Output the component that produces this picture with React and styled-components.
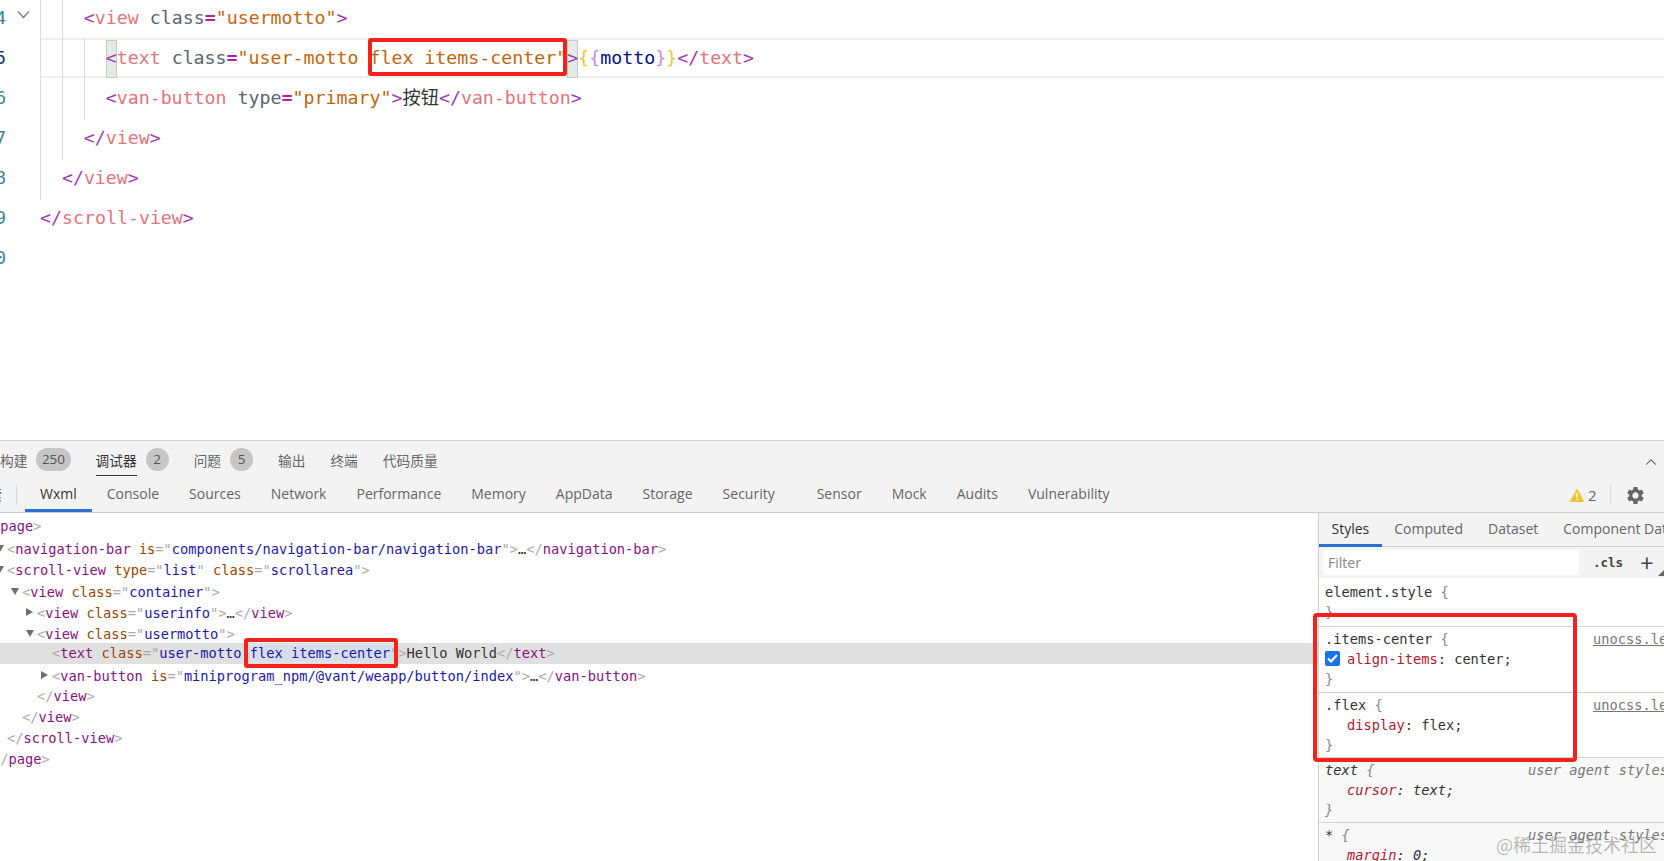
import React from 'react';
import styled, { createGlobalStyle } from 'styled-components';
import { ChevronUp } from 'lucide-react';
import { MdSettings } from 'react-icons/md';

const GlobalStyle = createGlobalStyle`
  html, body {
    margin: 0;
    height: 100%;
    overflow: hidden;
    background: #fff;
  }
`;

const MONO = '"DejaVu Sans Mono", "Liberation Mono", "Noto Sans CJK SC", monospace';
const UI = '"Open Sans", "Noto Sans CJK SC", sans-serif';

const Page = styled.div`
  width: 1664px;
  height: 861px;
  overflow: hidden;
  position: relative;
  display: flex;
  flex-direction: column;
`;

/* editor */
const Editor = styled.div`
  height: 440px;
  flex-shrink: 0;
  overflow: hidden;
  font-family: ${MONO};
  font-size: 18.25px;
`;

const CodeList = styled.div`
  margin-top: -2px;
`;

const CodeLine = styled.div`
  display: flex;
  height: 40px;
`;

const Gutter = styled.div`
  width: 6px;
  flex-shrink: 0;
  overflow: hidden;
  direction: rtl;
  line-height: 40px;
  font-size: 18px;
  color: ${p => (p.$active ? '#17405e' : '#3d8491')};
`;

const Fold = styled.div`
  width: 34px;
  flex-shrink: 0;
  padding: 4px 0 0 11px;
  box-sizing: border-box;
  color: #777;
`;

const CodeBody = styled.div`
  flex: 1;
  position: relative;
  box-sizing: border-box;
  height: 40px;
  line-height: ${p => (p.$active ? '36px' : '40px')};
  white-space: pre;
  padding-left: ${p => p.$indent * 21.9}px;
  color: #5b6470;
  ${p => p.$active && 'border-top: 2px solid #eeeeee; border-bottom: 2px solid #eeeeee;'}
`;

const Guide = styled.span`
  position: absolute;
  top: -2px;
  bottom: -2px;
  left: ${p => p.$x}px;
  width: 1px;
  background: #dcdcdc;
`;

const Bracket = styled.span`
  display: inline-block;
  height: 38px;
  vertical-align: top;
  background: #e4ebe4;
  box-shadow: inset 0 0 0 1px #c4ccc4;
  color: #a03cb4;
`;

const Punct = styled.span`
  color: #a03cb4;
`;
const TagName = styled.span`
  color: #e5737d;
`;
const AttrName = styled.span`
  color: #5b6470;
`;
const Equals = styled.span`
  color: #b020a8;
  font-weight: 700;
`;
const StringText = styled.span`
  color: #c2660e;
`;
const Ident = styled.span`
  color: #001080;
`;
const Curly = styled.span`
  color: ${p => p.$c};
`;
const CodeCjk = styled.span`
  color: #333;
`;

const Mark = styled.span`
  position: relative;
  &::after {
    content: '';
    position: absolute;
    box-sizing: border-box;
    left: ${p => p.$left}px;
    right: ${p => p.$right}px;
    top: calc(50% - ${p => p.$height / 2 + p.$lift}px);
    height: ${p => p.$height}px;
    border: 4px solid #f5221b;
    border-radius: 3px;
    pointer-events: none;
  }
`;

/* bottom panel */
const Panel = styled.div`
  flex: 1;
  min-height: 0;
  display: flex;
  flex-direction: column;
  border-top: 1px solid #d2d2d2;
`;

const TopBar = styled.div`
  height: 37px;
  flex-shrink: 0;
  display: flex;
  align-items: center;
  gap: 25px;
  box-sizing: border-box;
  background: #f3f3f3;
  font-family: ${UI};
  font-size: 13.7px;
  color: #666;
  position: relative;
`;

const TopTab = styled.div`
  display: flex;
  align-items: center;
  gap: 9px;
  position: relative;
`;

const TopLabel = styled.span`
  position: relative;
  color: ${p => (p.$active ? '#333' : '#666')};
  ${p =>
    p.$active &&
    `&::after {
      content: '';
      position: absolute;
      left: 0;
      right: 0;
      bottom: -6px;
      height: 1px;
      background: #333;
    }`}
`;

const Pill = styled.span`
  min-width: 23px;
  height: 23px;
  box-sizing: border-box;
  padding: 0 5.5px;
  border-radius: 12px;
  background: #c6c6c6;
  color: #555;
  font-size: 13.5px;
  line-height: 22px;
  text-align: center;
`;

const CollapseBtn = styled.div`
  position: absolute;
  right: 4px;
  top: 12px;
  color: #444;
  line-height: 0;
`;

const SubBar = styled.div`
  height: 35px;
  flex-shrink: 0;
  display: flex;
  align-items: center;
  box-sizing: border-box;
  background: #f3f3f3;
  border-bottom: 1px solid #cfcfcf;
  font-family: ${UI};
  font-size: 14px;
  color: #666;
`;

const SearchStub = styled.div`
  width: 17px;
  height: 20px;
  flex-shrink: 0;
  overflow: hidden;
  direction: rtl;
  line-height: 20px;
  font-size: 14px;
  border-right: 1px solid #dadada;
  padding-right: 14px;
  box-sizing: border-box;
  margin-right: 8px;
`;

const SubTab = styled.div`
  height: 34px;
  box-sizing: border-box;
  line-height: 31px;
  padding: 0 15px;
  margin-right: ${p => p.$after || 0}px;
  color: ${p => (p.$active ? '#333' : '#666')};
  border-bottom: 3px solid ${p => (p.$active ? '#2b6fd0' : 'transparent')};
`;

const SubRight = styled.div`
  margin-left: auto;
  display: flex;
  align-items: center;
  padding-right: 18.5px;
  color: #666;
`;

const WarnCount = styled.span`
  margin-left: 4px;
  font-size: 15px;
`;

const Divider = styled.span`
  width: 1px;
  height: 20px;
  background: #d8d8d8;
  margin: 0 14px 0 13px;
`;

const Body = styled.div`
  flex: 1;
  min-height: 0;
  display: flex;
`;

/* wxml tree */
const Tree = styled.div`
  width: 1318px;
  flex-shrink: 0;
  padding-top: 3px;
  font-family: ${MONO};
  font-size: 13.7px;
  overflow: hidden;
`;

const TreeRow = styled.div`
  height: 21.2px;
  line-height: 21.2px;
  white-space: pre;
  padding-left: ${p => Math.max(p.$level * 15 + 7, 0)}px;
  text-indent: ${p => Math.min(p.$level * 15 + 7, 0)}px;
  background: ${p => (p.$selected ? '#e0e0e0' : 'transparent')};
  color: #a9a9a9;
`;

const Caret = styled.span`
  display: inline-block;
  margin-left: -11px;
  width: 11px;
  vertical-align: 2px;
  &::before {
    content: '';
    display: inline-block;
    border-style: solid;
    border-color: transparent;
    ${p =>
      p.$open
        ? 'border-width: 7px 4px 0 4px; border-top-color: #6e6e6e;'
        : 'border-width: 4px 0 4px 7px; border-left-color: #6e6e6e;'}
  }
`;

const TTag = styled.span`
  color: #881280;
`;
const TAttr = styled.span`
  color: #994500;
`;
const TStr = styled.span`
  color: #1a1aa6;
`;
const TText = styled.span`
  color: #333;
`;
const Selected = styled(Mark)`
  background: #d6deea;
`;

/* styles pane */
const StylesPane = styled.div`
  flex: 1;
  min-width: 0;
  border-left: 1px solid #cfcfcf;
  overflow: hidden;
  display: flex;
  flex-direction: column;
`;

const PaneTabs = styled.div`
  height: 34px;
  flex-shrink: 0;
  display: flex;
  box-sizing: border-box;
  background: #f3f3f3;
  border-bottom: 1px solid #cfcfcf;
  font-family: ${UI};
  font-size: 14px;
  white-space: nowrap;
`;

const PaneTab = styled.div`
  height: 34px;
  box-sizing: border-box;
  padding: 0 12.5px;
  line-height: 32px;
  color: ${p => (p.$active ? '#333' : '#666')};
  border-bottom: 3px solid ${p => (p.$active ? '#2b6fd0' : 'transparent')};
`;

const FilterRow = styled.div`
  height: 31px;
  flex-shrink: 0;
  display: flex;
  align-items: center;
  padding-left: 4px;
  background: #f3f3f3;
  position: relative;
`;

const FilterInput = styled.div`
  width: 256px;
  height: 25px;
  background: #fff;
  box-sizing: border-box;
  padding-left: 5px;
  font-family: ${UI};
  font-size: 14px;
  line-height: 25px;
  color: #888;
`;

const ClsBtn = styled.div`
  margin-left: 14px;
  font-family: ${MONO};
  font-size: 12.5px;
  font-weight: 700;
  color: #444;
`;

const PlusBtn = styled.div`
  margin-left: 17px;
  font-family: ${UI};
  font-size: 24px;
  color: #444;
  line-height: 25px;
`;

const Corner = styled.span`
  position: absolute;
  right: 0;
  bottom: 2px;
  border-style: solid;
  border-width: 0 0 6px 6px;
  border-color: transparent transparent #666 transparent;
`;

const RuleBlock = styled.div`
  flex-shrink: 0;
  box-sizing: border-box;
  height: ${p => p.$h}px;
  padding: ${p => p.$top}px 0 0 6px;
  border-bottom: 1px solid #d2d2d2;
  font-family: ${MONO};
  font-size: 13.7px;
  line-height: 20px;
  white-space: pre;
  font-style: ${p => (p.$agent ? 'italic' : 'normal')};
  background: ${p => (p.$agent ? '#f8f8f8' : '#fff')};
  color: #333;
`;

const RuleHead = styled.div`
  display: flex;
  justify-content: space-between;
`;

const Source = styled.span`
  flex-shrink: 0;
  width: ${p => p.$w}px;
  color: #777;
  text-decoration: ${p => (p.$link ? 'underline' : 'none')};
`;

const Brace = styled.span`
  color: #888;
`;

const Decl = styled.div`
  display: flex;
  align-items: center;
  padding-left: 22px;
  position: relative;
`;

const Prop = styled.span`
  color: #b5172e;
`;

const CheckBox = styled.span`
  position: absolute;
  left: 0;
  top: 2px;
  width: 15px;
  height: 15px;
  border-radius: 2px;
  background: #1a73e8;
  display: flex;
  align-items: center;
  justify-content: center;
`;

const RedFrame = styled.div`
  position: absolute;
  left: 1313px;
  top: 613px;
  width: 264px;
  height: 149px;
  box-sizing: border-box;
  border: 4px solid #f5221b;
  border-radius: 4px;
  pointer-events: none;
`;

const Watermark = styled.div`
  position: absolute;
  right: 7px;
  bottom: 5px;
  font-family: "Noto Sans CJK SC", sans-serif;
  font-size: 18px;
  line-height: 24px;
  color: rgba(110, 110, 110, 0.48);
  pointer-events: none;
`;

const subTabs = [
  ['Wxml'], ['Console'], ['Sources'], ['Network'], ['Performance'], ['Memory'],
  ['AppData'], ['Storage'], ['Security', 12], ['Sensor'], ['Mock'], ['Audits'], ['Vulnerability'],
];

// opens with purple angle bracket, used all over the editor
const Open = ({ name }) => (
  <>
    <Punct>&lt;</Punct>
    <TagName>{name}</TagName>
  </>
);

const Close = ({ name }) => (
  <>
    <Punct>&lt;/</Punct>
    <TagName>{name}</TagName>
    <Punct>&gt;</Punct>
  </>
);

const Line = ({ no, indent, guides, active, fold, children }) => (
  <CodeLine>
    <Gutter $active={active}>{no}</Gutter>
    <Fold>
      {fold && (
        <svg width="13" height="9" viewBox="0 0 13 9" fill="none" stroke="currentColor" strokeWidth="1.2">
          <path d="M1 1.5 L6.5 7.5 L12 1.5" />
        </svg>
      )}
    </Fold>
    <CodeBody $indent={indent} $active={active}>
      {guides.map(x => (
        <Guide key={x} $x={x} />
      ))}
      {children}
    </CodeBody>
  </CodeLine>
);

const TreeTag = ({ name, attrs = [], tail }) => (
  <>
    &lt;<TTag>{name}</TTag>
    {attrs.map(([k, v]) => (
      <React.Fragment key={k}>
        {' '}
        <TAttr>{k}</TAttr>="<TStr>{v}</TStr>"
      </React.Fragment>
    ))}
    &gt;
    {tail && (
      <>
        <TText>…</TText>&lt;/<TTag>{tail}</TTag>&gt;
      </>
    )}
  </>
);

const TreeEnd = ({ name }) => (
  <>
    &lt;/<TTag>{name}</TTag>&gt;
  </>
);

export default function App() {
  return (
    <Page>
      <GlobalStyle />
      <Editor>
        <CodeList>
          <Line no="14" indent={2} guides={[0, 22]} fold>
            <Open name="view" /> <AttrName>class</AttrName>
            <Equals>=</Equals>
            <StringText>"usermotto"</StringText>
            <Punct>&gt;</Punct>
          </Line>
          <Line no="15" indent={3} guides={[0, 22, 44]} active>
            <Bracket>&lt;</Bracket>
            <TagName>text</TagName> <AttrName>class</AttrName>
            <Equals>=</Equals>
            <StringText>"user-motto </StringText>
            <Mark $left={-1} $right={0} $height={38} $lift={1}>
              <StringText>flex items-center"</StringText>
            </Mark>
            <Bracket>&gt;</Bracket>
            <Curly $c="#f2c72e">{'{'}</Curly>
            <Curly $c="#c58ae6">{'{'}</Curly>
            <Ident>motto</Ident>
            <Curly $c="#c58ae6">{'}'}</Curly>
            <Curly $c="#f2c72e">{'}'}</Curly>
            <Close name="text" />
          </Line>
          <Line no="16" indent={3} guides={[0, 22, 44]}>
            <Open name="van-button" /> <AttrName>type</AttrName>
            <Equals>=</Equals>
            <StringText>"primary"</StringText>
            <Punct>&gt;</Punct>
            <CodeCjk>按钮</CodeCjk>
            <Close name="van-button" />
          </Line>
          <Line no="17" indent={2} guides={[0, 22]}>
            <Close name="view" />
          </Line>
          <Line no="18" indent={1} guides={[0]}>
            <Close name="view" />
          </Line>
          <Line no="19" indent={0} guides={[]}>
            <Close name="scroll-view" />
          </Line>
          <Line no="20" indent={0} guides={[]} />
        </CodeList>
      </Editor>

      <Panel>
        <TopBar>
          <TopTab>
            <TopLabel>构建</TopLabel>
            <Pill>250</Pill>
          </TopTab>
          <TopTab>
            <TopLabel $active>调试器</TopLabel>
            <Pill>2</Pill>
          </TopTab>
          <TopTab>
            <TopLabel>问题</TopLabel>
            <Pill>5</Pill>
          </TopTab>
          <TopTab>输出</TopTab>
          <TopTab>终端</TopTab>
          <TopTab>代码质量</TopTab>
          <CollapseBtn>
            <ChevronUp size={18} strokeWidth={1.4} />
          </CollapseBtn>
        </TopBar>

        <SubBar>
          <SearchStub>索</SearchStub>
          {subTabs.map(([name, after]) => (
            <SubTab key={name} $active={name === 'Wxml'} $after={after}>
              {name}
            </SubTab>
          ))}
          <SubRight>
            <svg width="14" height="13" viewBox="0 0 14 13">
              <path d="M7 0.5 L13.7 12.5 L0.3 12.5 Z" fill="#f1c232" stroke="#f1c232" strokeLinejoin="round" />
              <path d="M7 4 V8.5 M7 9.8 V11" stroke="#fff" strokeWidth="1.5" />
            </svg>
            <WarnCount>2</WarnCount>
            <Divider />
            <MdSettings size={21} color="#666" />
          </SubRight>
        </SubBar>

        <Body>
          <Tree>
            <TreeRow $level={-1}>
              <TreeTag name="page" />
            </TreeRow>
            <TreeRow $level={0}>
              <Caret $open />
              <TreeTag
                name="navigation-bar"
                attrs={[['is', 'components/navigation-bar/navigation-bar']]}
                tail="navigation-bar"
              />
            </TreeRow>
            <TreeRow $level={0}>
              <Caret $open />
              <TreeTag name="scroll-view" attrs={[['type', 'list'], ['class', 'scrollarea']]} />
            </TreeRow>
            <TreeRow $level={1}>
              <Caret $open />
              <TreeTag name="view" attrs={[['class', 'container']]} />
            </TreeRow>
            <TreeRow $level={2}>
              <Caret />
              <TreeTag name="view" attrs={[['class', 'userinfo']]} tail="view" />
            </TreeRow>
            <TreeRow $level={2}>
              <Caret $open />
              <TreeTag name="view" attrs={[['class', 'usermotto']]} />
            </TreeRow>
            <TreeRow $level={3} $selected>
              &lt;<TTag>text</TTag> <TAttr>class</TAttr>="<TStr>user-motto </TStr>
              <Selected $left={-6} $right={0} $height={30} $lift={0}>
                <TStr>flex items-center</TStr>"
              </Selected>
              &gt;<TText>Hello World</TText>
              <TreeEnd name="text" />
            </TreeRow>
            <TreeRow $level={3}>
              <Caret />
              <TreeTag name="van-button" attrs={[['is', 'miniprogram_npm/@vant/weapp/button/index']]} tail="van-button" />
            </TreeRow>
            <TreeRow $level={2}>
              <TreeEnd name="view" />
            </TreeRow>
            <TreeRow $level={1}>
              <TreeEnd name="view" />
            </TreeRow>
            <TreeRow $level={0}>
              <TreeEnd name="scroll-view" />
            </TreeRow>
            <TreeRow $level={-1}>
              <TreeEnd name="page" />
            </TreeRow>
          </Tree>

          <StylesPane>
            <PaneTabs>
              <PaneTab $active>Styles</PaneTab>
              <PaneTab>Computed</PaneTab>
              <PaneTab>Dataset</PaneTab>
              <PaneTab>Component Data</PaneTab>
            </PaneTabs>
            <FilterRow>
              <FilterInput>Filter</FilterInput>
              <ClsBtn>.cls</ClsBtn>
              <PlusBtn>+</PlusBtn>
              <Corner />
            </FilterRow>
            <RuleBlock $h={49} $top={4}>
              <div>
                element.style <Brace>{'{'}</Brace>
              </div>
              <Brace>{'}'}</Brace>
            </RuleBlock>
            <RuleBlock $h={66} $top={2}>
              <RuleHead>
                <span>
                  .items-center <Brace>{'{'}</Brace>
                </span>
                <Source $w={71} $link>
                  unocss.less:1
                </Source>
              </RuleHead>
              <Decl>
                <CheckBox>
                  <svg width="11" height="9" viewBox="0 0 11 9" fill="none" stroke="#fff" strokeWidth="2">
                    <path d="M1 4.5 L4 7.5 L10 1" />
                  </svg>
                </CheckBox>
                <Prop>align-items</Prop>: center;
              </Decl>
              <Brace>{'}'}</Brace>
            </RuleBlock>
            <RuleBlock $h={65} $top={2}>
              <RuleHead>
                <span>
                  .flex <Brace>{'{'}</Brace>
                </span>
                <Source $w={71} $link>
                  unocss.less:1
                </Source>
              </RuleHead>
              <Decl>
                <Prop>display</Prop>: flex;
              </Decl>
              <Brace>{'}'}</Brace>
            </RuleBlock>
            <RuleBlock $h={65} $top={2} $agent>
              <RuleHead>
                <span>
                  text <Brace>{'{'}</Brace>
                </span>
                <Source $w={136}>user agent styles</Source>
              </RuleHead>
              <Decl>
                <Prop>cursor</Prop>: text;
              </Decl>
              <Brace>{'}'}</Brace>
            </RuleBlock>
            <RuleBlock $h={65} $top={2} $agent>
              <RuleHead>
                <span>
                  * <Brace>{'{'}</Brace>
                </span>
                <Source $w={136}>user agent styles</Source>
              </RuleHead>
              <Decl>
                <Prop>margin</Prop>: 0;
              </Decl>
            </RuleBlock>
          </StylesPane>
        </Body>
      </Panel>

      <RedFrame />
      <Watermark>@稀土掘金技术社区</Watermark>
    </Page>
  );
}
